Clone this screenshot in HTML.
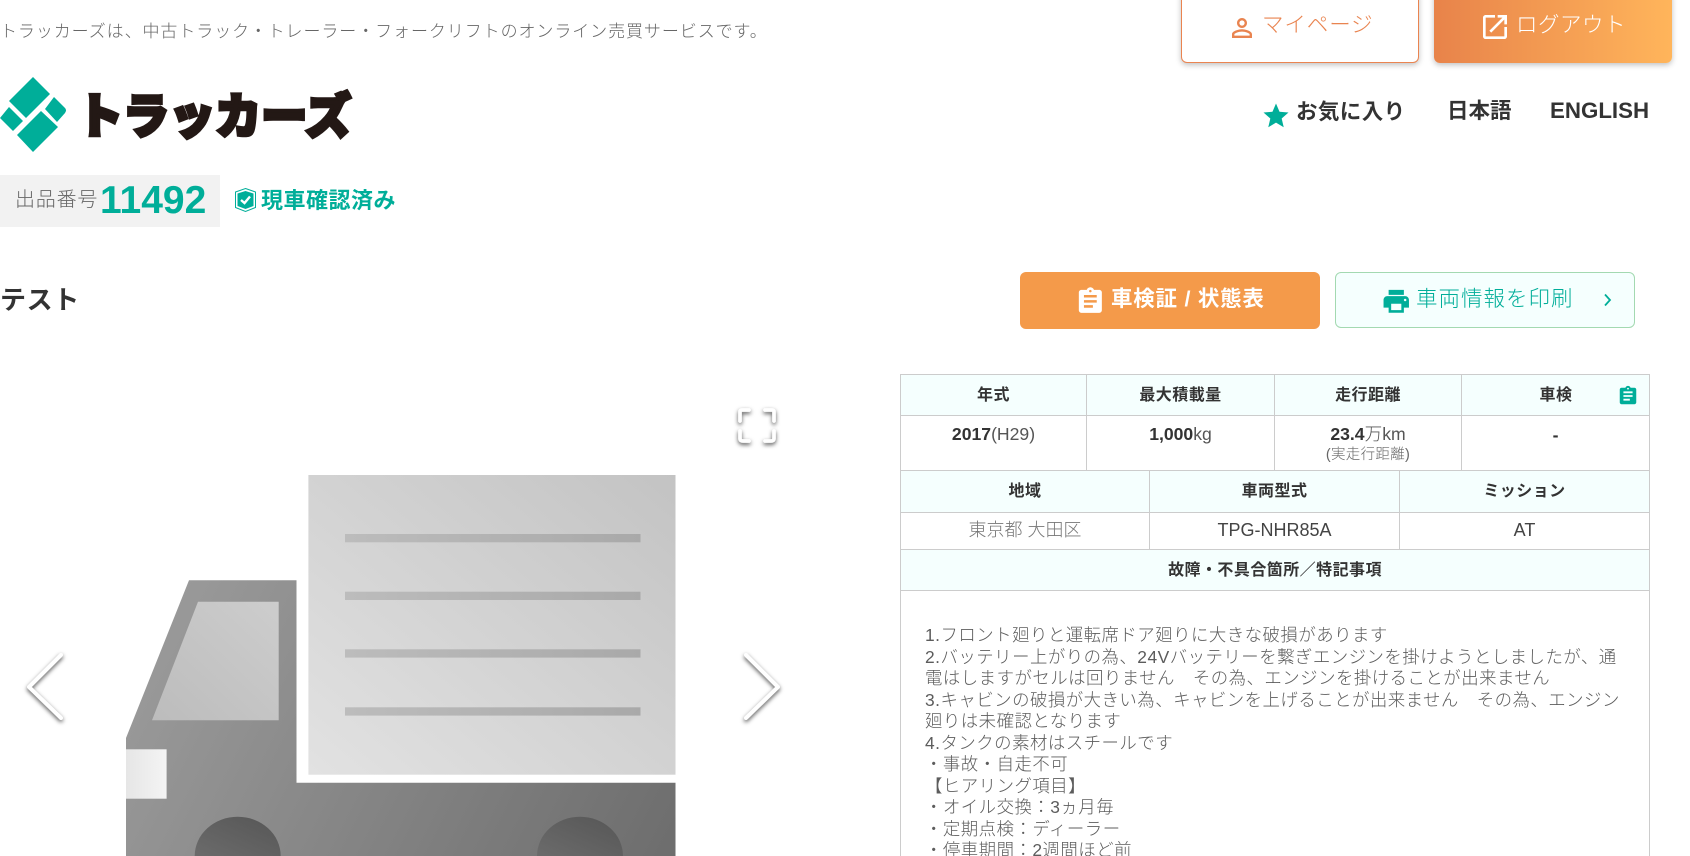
<!DOCTYPE html>
<html lang="ja">
<head>
<meta charset="utf-8">
<title>トラッカーズ</title>
<style>
html,body{margin:0;padding:0;background:#fff;width:1690px;height:856px;overflow:hidden;}
body{font-family:"Liberation Sans","Noto Sans CJK JP",sans-serif;color:#666;font-weight:300;}
b{font-weight:700;}
#p{position:absolute;left:0;top:0;width:1690px;height:856px;overflow:hidden;}
.t{position:absolute;white-space:nowrap;margin:0;}
.c{text-align:center;}
.b{font-weight:bold;color:#333;}
svg{position:absolute;overflow:visible;}
.box{position:absolute;box-sizing:border-box;}
.cell{position:absolute;box-sizing:border-box;border:1px solid #ccc;}
.h{background:#f5fffe;}
.th{font-size:16px;letter-spacing:.45px;font-weight:bold;color:#333;text-align:center;}
</style>
</head>
<body>
<div id="p">

<div class="t" style="left:0;top:20px;line-height:24px;font-size:17px;letter-spacing:.92px;color:#666;">トラッカーズは、中古トラック・トレーラー・フォークリフトのオンライン売買サービスです。</div>

<div class="box" style="left:1181px;top:-10px;width:238px;height:73px;background:#fff;border:1px solid #ea8450;border-radius:6px;box-shadow:0 2px 6px rgba(0,0,0,.25);"></div>
<svg style="left:1227px;top:13px" width="30" height="30" viewBox="0 0 24 24" fill="#e98450"><path d="M12 5.9a2.1 2.1 0 1 1 0 4.2 2.1 2.1 0 0 1 0-4.2m0 9c2.97 0 6.1 1.46 6.1 2.1v1.1H5.9V17c0-.64 3.13-2.1 6.1-2.1M12 4C9.79 4 8 5.79 8 8s1.79 4 4 4 4-1.79 4-4-1.79-4-4-4zm0 9c-2.67 0-8 1.34-8 4v3h16v-3c0-2.66-5.33-4-8-4z"/></svg>
<div class="t" style="left:1262px;top:11px;line-height:28px;font-size:21.5px;letter-spacing:.9px;color:#e98450;">マイページ</div>

<div class="box" style="left:1434px;top:-10px;width:238px;height:73px;background:linear-gradient(90deg,#e8834a,#ffb55b);border-radius:6px;box-shadow:0 2px 6px rgba(0,0,0,.25);"></div>
<svg style="left:1479px;top:11px" width="32" height="32" viewBox="0 0 24 24" fill="#fff"><path d="M19 19H5V5h7V3H5c-1.11 0-2 .9-2 2v14c0 1.1.89 2 2 2h14c1.1 0 2-.9 2-2v-7h-2v7zM14 3v2h3.59l-9.83 9.83 1.41 1.41L19 6.41V10h2V3h-7z"/></svg>
<div class="t" style="left:1516px;top:11px;line-height:28px;font-size:21.5px;letter-spacing:.5px;color:#fff;">ログアウト</div>

<svg style="left:0;top:0" width="360" height="160">
  <polygon fill="#00ae99" points="33,77 50,94 26,118 9,101"/>
  <polygon fill="#00ae99" points="9,107 23,121 13,131 0,118"/>
  <path fill="#00ae99" d="M54,97 L65,108 Q67,110 65,113 L57,122 L45,109 Z"/>
  <polygon fill="#00ae99" points="41,111 58,127 33,152 17,135"/>
  <text x="77" y="133" font-size="48" font-weight="900" fill="#231815" stroke="#231815" stroke-width="3.5" textLength="274" lengthAdjust="spacingAndGlyphs" font-family="'Noto Sans CJK JP',sans-serif">トラッカーズ</text>
</svg>

<svg style="left:1260.5px;top:100.5px" width="30" height="30" viewBox="0 0 24 24" fill="#00ae99"><path d="M12 17.27L18.18 21l-1.64-7.03L22 9.24l-7.19-.61L12 2 9.19 8.63 2 9.24l5.46 4.73L5.82 21z"/></svg>
<div class="t b" style="left:1296px;top:98px;line-height:28px;font-size:21.5px;letter-spacing:.4px;">お気に入り</div>
<div class="t b" style="left:1447px;top:97px;line-height:28px;font-size:21.5px;">日本語</div>
<div class="t b" style="left:1550px;top:97px;line-height:28px;font-size:22.3px;">ENGLISH</div>

<div class="box" style="left:0;top:175px;width:220px;height:52px;background:#f2f2f2;"></div>
<div class="t" style="left:15px;top:186px;line-height:28px;font-size:20px;letter-spacing:.8px;color:#666;">出品番号</div>
<div class="t" style="left:100px;top:179px;line-height:44px;font-size:39px;font-weight:bold;color:#00ae99;">11492</div>
<svg style="left:235px;top:188px" width="21" height="24" viewBox="0 0 21 24">
  <polygon points="10.5,.5 20.5,4 20.5,19.5 10.5,23.5 .5,19.5 .5,4" fill="#fff" stroke="#00ae99" stroke-width="1"/>
  <polygon points="10.5,3 18.5,5.5 18.5,18 10.5,21 2.5,18 2.5,5.5" fill="#00ae99"/>
  <path d="M6 12 L9.5 15 L15 8.5" fill="none" stroke="#fff" stroke-width="2.4"/>
</svg>
<div class="t" style="left:261px;top:187px;line-height:28px;font-size:22px;letter-spacing:.5px;font-weight:bold;color:#00ae99;">現車確認済み</div>

<div class="t b" style="left:0;top:283px;line-height:34px;font-size:26px;letter-spacing:.6px;">テスト</div>

<div class="box" style="left:1020px;top:272px;width:300px;height:57px;background:#f49a4a;border-radius:6px;"></div>
<svg style="left:1075px;top:286px" width="30.7" height="30.7" viewBox="0 0 24 24" fill="#fff"><path d="M19 3h-4.18C14.4 1.84 13.3 1 12 1c-1.3 0-2.4.84-2.82 2H5c-1.1 0-2 .9-2 2v14c0 1.1.9 2 2 2h14c1.1 0 2-.9 2-2V5c0-1.1-.9-2-2-2zm-7 0c.55 0 1 .45 1 1s-.45 1-1 1-1-.45-1-1 .45-1 1-1zm2 14H7v-2h7v2zm3-4H7v-2h10v2zm0-4H7V7h10v2z"/></svg>
<div class="t" style="left:1111px;top:284.5px;line-height:28px;font-size:21.5px;letter-spacing:.75px;font-weight:bold;color:#fff;">車検証 / 状態表</div>

<div class="box" style="left:1335px;top:272px;width:300px;height:56px;background:#f5fffe;border:1px solid #a3d9b1;border-radius:6px;"></div>
<svg style="left:1380.5px;top:286px" width="30.5" height="30.5" viewBox="0 0 24 24" fill="#00ae99"><path d="M19 8H5c-1.66 0-3 1.34-3 3v6h4v4h12v-4h4v-6c0-1.66-1.34-3-3-3zm-3 11H8v-5h8v5zm3-7c-.55 0-1-.45-1-1s.45-1 1-1 1 .45 1 1-.45 1-1 1zm-1-9H6v4h12V3z"/></svg>
<div class="t" style="left:1416px;top:285px;line-height:28px;font-size:21.5px;letter-spacing:1px;color:#00ae99;">車両情報を印刷</div>
<svg style="left:1600px;top:290px" width="16" height="20"><path d="M5 4.5 L10 10 L5 15.5" fill="none" stroke="#00ae99" stroke-width="1.8"/></svg>

<!-- truck image -->
<svg style="left:0;top:380px;overflow:hidden" width="845" height="476" viewBox="0 380 845 476">
  <defs>
    <linearGradient id="cargo" x1="1" y1="0" x2="0" y2="1"><stop offset="0" stop-color="#c3c3c3"/><stop offset="1" stop-color="#e2e2e2"/></linearGradient>
    <linearGradient id="line" x1="0" y1="0" x2="1" y2="0"><stop offset="0" stop-color="#bcbcbc"/><stop offset="1" stop-color="#a9a9a9"/></linearGradient>
    <linearGradient id="cab" gradientUnits="userSpaceOnUse" x1="130" y1="580" x2="675" y2="860"><stop offset="0" stop-color="#9d9d9d"/><stop offset="1" stop-color="#6d6d6d"/></linearGradient>
    <linearGradient id="win" x1="1" y1="0" x2="0" y2="1"><stop offset="0" stop-color="#cdcdcd"/><stop offset="1" stop-color="#bcbcbc"/></linearGradient>
    <linearGradient id="lamp" x1="0" y1="0" x2="1" y2="0"><stop offset="0" stop-color="#e6e6e6"/><stop offset="1" stop-color="#f4f4f4"/></linearGradient>
    <linearGradient id="arch" x1="0" y1="1" x2="1" y2="0"><stop offset="0" stop-color="#6b6b6b"/><stop offset="1" stop-color="#565656"/></linearGradient>
    <filter id="sh" x="-60%" y="-60%" width="220%" height="220%"><feDropShadow dx="0" dy="2" stdDeviation="2" flood-color="#000" flood-opacity=".7"/></filter>
  </defs>
  <rect x="308.4" y="475" width="367.1" height="299.7" fill="url(#cargo)"/>
  <rect x="345" y="534" width="295.5" height="8.3" fill="url(#line)"/>
  <rect x="345" y="591.7" width="295.5" height="8.3" fill="url(#line)"/>
  <rect x="345" y="649.3" width="295.5" height="8.3" fill="url(#line)"/>
  <rect x="345" y="707.3" width="295.5" height="8.3" fill="url(#line)"/>
  <polygon points="189,580.3 296.5,580.3 296.5,782.7 675.5,782.7 675.5,856 126,856 126,738" fill="url(#cab)"/>
  <polygon points="198,601.7 278.7,601.7 278.7,720.3 152,720.3" fill="url(#win)"/>
  <rect x="126" y="749.3" width="40.6" height="49.4" fill="url(#lamp)"/>
  <path d="M194.7 856 A43 39.3 0 0 1 280.7 856 Z" fill="url(#arch)"/>
  <path d="M537 856 A43 39.3 0 0 1 623 856 Z" fill="url(#arch)"/>
  <g fill="none" stroke="#fff" filter="url(#sh)" stroke-linecap="round" stroke-linejoin="round">
    <path d="M61 655 L29 687 L61 718" stroke-width="3.8"/>
    <path d="M746 655 L778 687 L746 718" stroke-width="3.8"/>
    <path d="M740 421 V412 Q740 410 742 410 H749 M774 421 V412 Q774 410 772 410 H765 M740 431 V438.5 Q740 441 743 441 H749 M774 431 V438.5 Q774 441 771 441 H765" stroke-width="3.5"/>
  </g>
</svg>

<!-- spec table -->
<div class="cell h" style="left:900px;top:374px;width:187px;height:42px;"></div>
<div class="cell h" style="left:1086px;top:374px;width:189px;height:42px;"></div>
<div class="cell h" style="left:1274px;top:374px;width:188px;height:42px;"></div>
<div class="cell h" style="left:1461px;top:374px;width:189px;height:42px;"></div>
<div class="t th" style="left:900px;width:187px;top:382px;line-height:28px;">年式</div>
<div class="t th" style="left:1086px;width:189px;top:382px;line-height:28px;">最大積載量</div>
<div class="t th" style="left:1274px;width:188px;top:382px;line-height:28px;">走行距離</div>
<div class="t th" style="left:1461px;width:190px;top:382px;line-height:28px;">車検</div>
<svg style="left:1617px;top:385px" width="22" height="22" viewBox="0 0 24 24" fill="#00ae99"><path d="M19 3h-4.18C14.4 1.84 13.3 1 12 1c-1.3 0-2.4.84-2.82 2H5c-1.1 0-2 .9-2 2v14c0 1.1.9 2 2 2h14c1.1 0 2-.9 2-2V5c0-1.1-.9-2-2-2zm-7 0c.55 0 1 .45 1 1s-.45 1-1 1-1-.45-1-1 .45-1 1-1zm2 14H7v-2h7v2zm3-4H7v-2h10v2zm0-4H7V7h10v2z"/></svg>

<div class="cell" style="left:900px;top:415px;width:187px;height:56px;"></div>
<div class="cell" style="left:1086px;top:415px;width:189px;height:56px;"></div>
<div class="cell" style="left:1274px;top:415px;width:188px;height:56px;"></div>
<div class="cell" style="left:1461px;top:415px;width:189px;height:56px;"></div>
<div class="t c" style="left:900px;width:187px;top:422px;line-height:24px;font-size:17.6px;color:#555;"><b style="color:#333">2017</b>(H29)</div>
<div class="t c" style="left:1086px;width:189px;top:422px;line-height:24px;font-size:17.6px;color:#555;"><b style="color:#333">1,000</b>kg</div>
<div class="t c" style="left:1274px;width:188px;top:422px;line-height:24px;font-size:17.6px;color:#555;"><b style="color:#333">23.4</b>万km</div>
<div class="t c" style="left:1274px;width:188px;top:445px;line-height:20px;font-size:14.5px;color:#666;letter-spacing:.3px;">(実走行距離)</div>
<div class="t c" style="left:1461px;width:189px;top:423px;line-height:24px;font-size:17.6px;font-weight:bold;color:#333;">-</div>

<div class="cell h" style="left:900px;top:470px;width:250px;height:43px;"></div>
<div class="cell h" style="left:1149px;top:470px;width:251px;height:43px;"></div>
<div class="cell h" style="left:1399px;top:470px;width:251px;height:43px;"></div>
<div class="t th" style="left:900px;width:250px;top:477.5px;line-height:28px;">地域</div>
<div class="t th" style="left:1149px;width:251px;top:477.5px;line-height:28px;">車両型式</div>
<div class="t th" style="left:1399px;width:251px;top:477.5px;line-height:28px;">ミッション</div>

<div class="cell" style="left:900px;top:512px;width:250px;height:38px;"></div>
<div class="cell" style="left:1149px;top:512px;width:251px;height:38px;"></div>
<div class="cell" style="left:1399px;top:512px;width:251px;height:38px;"></div>
<div class="t c" style="left:900px;width:250px;top:518px;line-height:24px;font-size:18px;color:#777;">東京都 大田区</div>
<div class="t c" style="left:1149px;width:251px;top:518px;line-height:24px;font-size:18px;color:#444;">TPG-NHR85A</div>
<div class="t c" style="left:1399px;width:251px;top:518px;line-height:24px;font-size:18px;color:#444;">AT</div>

<div class="cell h" style="left:900px;top:549px;width:750px;height:42px;"></div>
<div class="t th" style="left:900px;width:750px;top:557px;line-height:28px;">故障・不具合箇所／特記事項</div>

<div class="box" style="left:900px;top:590px;width:750px;height:266px;border:1px solid #ccc;border-bottom:none;"></div>
<div class="t" style="left:925px;top:625px;height:231px;overflow:hidden;line-height:21.5px;font-size:17.4px;letter-spacing:.5px;color:#5c5c5c;">1.フロント廻りと運転席ドア廻りに大きな破損があります<br>2.バッテリー上がりの為、24Vバッテリーを繋ぎエンジンを掛けようとしましたが、通<br>電はしますがセルは回りません　その為、エンジンを掛けることが出来ません<br>3.キャビンの破損が大きい為、キャビンを上げることが出来ません　その為、エンジン<br>廻りは未確認となります<br>4.タンクの素材はスチールです<br>・事故・自走不可<br>【ヒアリング項目】<br>・オイル交換：3ヵ月毎<br>・定期点検：ディーラー<br>・停車期間：2週間ほど前</div>

</div>
</body>
</html>
